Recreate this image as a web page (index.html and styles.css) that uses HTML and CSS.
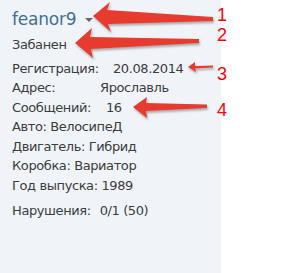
FILE: index.html
```html
<!DOCTYPE html>
<html lang="ru">
<head>
    <meta charset="UTF-8">
    <title>Профиль</title>
    <link rel="stylesheet" href="styles.css">
</head>
<body>
    <div id="profile">
        <div id="user-line">
            <a class="username" href="#">feanor9</a>
            <span class="caret"></span>
        </div>
        <div id="status">Забанен</div>
        <div id="info">
            <div class="row"><span class="label label-reg">Регистрация:</span><span class="value">20.08.2014</span></div>
            <div class="row"><span class="label label-addr">Адрес:</span><span class="value">Ярославль</span></div>
            <div class="row"><span class="label label-msg">Сообщений:</span><span class="value">16</span></div>
            <div class="row">Авто: ВелосипеД</div>
            <div class="row">Двигатель: Гибрид</div>
            <div class="row">Коробка: Вариатор</div>
            <div class="row">Год выпуска: 1989</div>
        </div>
        <div id="warnings" class="row"><span class="label">Нарушения:</span><span class="value value-warn">0/1 (50)</span></div>
    </div>

    <!-- пометки поверх скриншота -->
    <svg id="arrows" width="282" height="273" viewBox="0 0 282 273">
        <defs>
            <filter id="shadow" x="-10%" y="-50%" width="120%" height="200%">
                <feDropShadow dx="1" dy="2" stdDeviation="1" flood-color="#777" flood-opacity="0.6"/>
            </filter>
        </defs>
        <g fill="#e63a2e" filter="url(#shadow)">
            <polygon points="93,16 110,2 107,10 213,17 213,21 108,24 111,32"/>
            <polygon points="75,43 92,28 90,37 199,39 199,43 91,49 93,58"/>
            <polygon points="188,67 195,62 195,66 213,65.5 213,67.5 195,68.5 196,72"/>
            <polygon points="133,107 147,97 146,103 207,104.5 207,108 146,111 147,118"/>
        </g>
    </svg>
    <span class="mark mark-1">1</span>
    <span class="mark mark-2">2</span>
    <span class="mark mark-3">3</span>
    <span class="mark mark-4">4</span>
</body>
</html>
```

FILE: styles.css
```css
html, body {
    margin: 0;
    padding: 0;
    background-color: #fff;
}

body {
    position: relative;
    width: 282px;
    height: 273px;
    overflow: hidden;
    font-family: "DejaVu Sans", Verdana, sans-serif;
}

#profile {
    width: 221px;
    height: 273px;
    box-sizing: border-box;
    padding: 9px 0 0 12px;
    background-color: #f0f4f8;
    color: #3c3c3c;
    font-size: 13px;
    letter-spacing: -0.4px;
}

#user-line {
    display: flex;
    align-items: center;
    height: 20px;
}

.username {
    color: #41709a;
    font-size: 17px;
    line-height: 20px;
    letter-spacing: -0.2px;
    text-decoration: none;
}

.caret {
    width: 0;
    height: 0;
    margin: 2px 0 0 9px;
    border-left: 4px solid transparent;
    border-right: 4px solid transparent;
    border-top: 4px solid #666;
}

#status {
    margin-top: 6px;
    line-height: 19.5px;
}

#info {
    margin-top: 4px;
}

.row {
    line-height: 19.5px;
    white-space: nowrap;
}

.label {
    display: inline-block;
}

.label-reg {
    width: 101px;
}

.label-addr {
    width: 88px;
}

.label-msg {
    width: 94px;
}

.value-warn {
    margin-left: 9px;
}

#warnings {
    margin-top: 6px;
}

#arrows {
    position: absolute;
    top: 0;
    left: 0;
}

.mark {
    position: absolute;
    left: 217px;
    color: #f00;
    font-family: "Liberation Sans", Arial, sans-serif;
    font-size: 18px;
    line-height: 18px;
}

.mark-1 { top: 6px; }
.mark-2 { top: 26px; }
.mark-3 { top: 65px; }
.mark-4 { top: 101px; }
```
